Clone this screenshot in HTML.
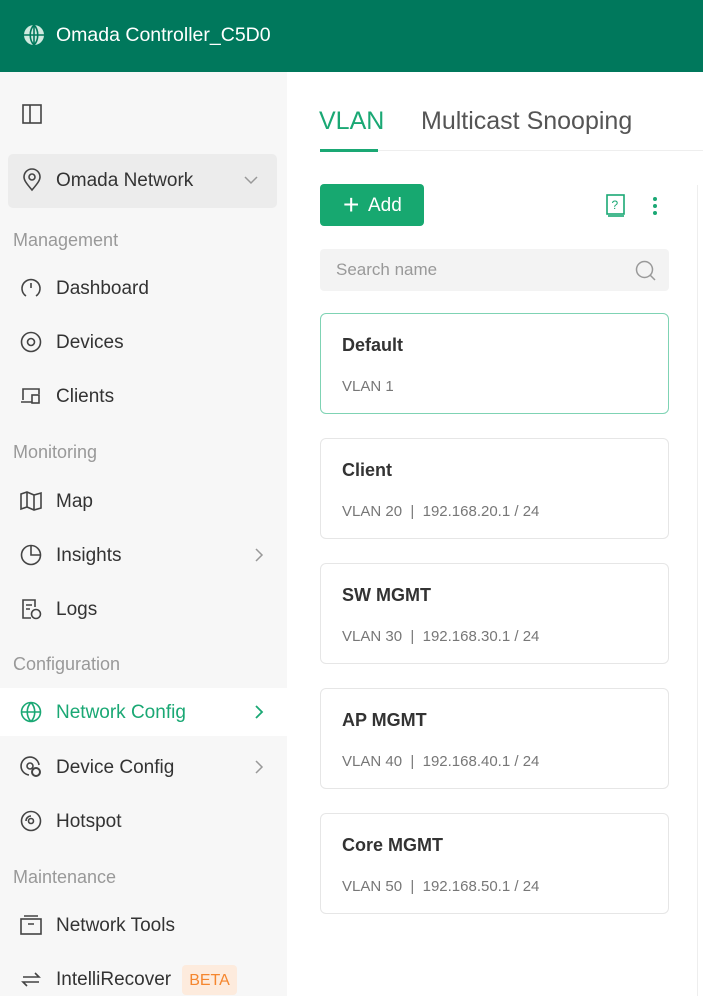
<!DOCTYPE html>
<html><head><meta charset="utf-8"><style>
*{margin:0;padding:0;box-sizing:border-box}
body{width:703px;height:996px;overflow:hidden;background:#fff;font-family:"Liberation Sans",sans-serif;position:relative;color:#333}
.hdr{position:absolute;left:0;top:0;width:703px;height:72px;background:#00785c;color:#fff;font-size:19.5px}
.hdr span{position:absolute;left:56px;top:24px}
.side{position:absolute;left:0;top:72px;width:287px;height:924px;background:#f7f7f7}
.a{position:absolute}
.sec{position:absolute;left:13px;font-size:18px;color:#999}
.it{position:absolute;left:0;width:287px;height:48px;font-size:19px;color:#333}
.it span{position:absolute;left:56px;top:14px}
.it svg{position:absolute;left:20px;top:13px}
.it .chev{left:255px;top:17px}
.card{position:absolute;left:320px;width:349px;height:101px;border:1px solid #e6e6e6;border-radius:6px;background:#fff}
.card b{position:absolute;left:21px;top:21px;font-size:18px;font-weight:bold;color:#333}
.card i{position:absolute;left:21px;top:64px;font-size:15px;font-style:normal;color:#777}
</style></head><body>
<div class="hdr"><svg class="a" style="left:23px;top:24px" width="22" height="22" viewBox="0 0 22 22"><circle cx="11" cy="11" r="10" fill="#cfe9df"/><path d="M11 1v20M1 11h20M11 1c-5 5-5 15 0 20M11 1c5 5 5 15 0 20" stroke="#00785c" stroke-width="1.6" fill="none"/></svg><span>Omada Controller_C5D0</span></div>
<div class="side">
<svg class="a" style="left:22px;top:32px" width="20" height="20"><rect x="1" y="1" width="18" height="18" fill="none" stroke="#444" stroke-width="1.6"/><line x1="8" y1="1" x2="8" y2="19" stroke="#444" stroke-width="1.6"/></svg>
<div class="a" style="left:8px;top:82px;width:269px;height:54px;background:#ececec;border-radius:5px"></div>
<svg class="a" style="left:22px;top:96px" width="20" height="24"><path d="M10 22C4 15 2 12 2 9a8 8 0 0116 0c0 3-2 6-8 13z" fill="none" stroke="#444" stroke-width="1.6"/><circle cx="10" cy="9" r="3" fill="none" stroke="#444" stroke-width="1.6"/></svg>
<div class="a" style="left:56px;top:98px;font-size:19px">Omada Network</div>
<svg class="a" style="left:244px;top:104px" width="14" height="9"><path d="M1 1l6 6 6-6" fill="none" stroke="#999" stroke-width="1.5"/></svg>
<div class="sec" style="top:158px">Management</div>
<div class="it" style="top:192px"><svg width="22" height="22"><path d="M6 19A9 9 0 1116 19" fill="none" stroke="#444" stroke-width="1.6"/><path d="M11 6v5" stroke="#444" stroke-width="1.6"/></svg><span>Dashboard</span></div>
<div class="it" style="top:246px"><svg width="22" height="22"><circle cx="11" cy="11" r="9.5" fill="none" stroke="#444" stroke-width="1.6"/><circle cx="11" cy="11" r="3.5" fill="none" stroke="#444" stroke-width="1.6"/></svg><span>Devices</span></div>
<div class="it" style="top:300px"><svg width="22" height="22"><path d="M3 15V4h16v5M1 17h11" fill="none" stroke="#444" stroke-width="1.6"/><rect x="12" y="10" width="7" height="8" fill="none" stroke="#444" stroke-width="1.6"/></svg><span>Clients</span></div>
<div class="sec" style="top:370px">Monitoring</div>
<div class="it" style="top:405px"><svg width="22" height="22"><path d="M1 4l6-2 7 3 7-2v15l-7 2-7-3-6 2z M7 2v15 M14 5v15" fill="none" stroke="#444" stroke-width="1.6"/></svg><span>Map</span></div>
<div class="it" style="top:459px"><svg width="22" height="22"><circle cx="11" cy="11" r="9.5" fill="none" stroke="#444" stroke-width="1.6"/><path d="M11 2v9h9" fill="none" stroke="#444" stroke-width="1.6"/></svg><span>Insights</span><svg class="chev" width="9" height="14"><path d="M1 1l6 6-6 6" fill="none" stroke="#999" stroke-width="1.5"/></svg></div>
<div class="it" style="top:513px"><svg width="22" height="22"><path d="M11 20H3V2h12v7M6 7h6M6 11h4" fill="none" stroke="#444" stroke-width="1.6"/><circle cx="16" cy="16" r="4.5" fill="none" stroke="#444" stroke-width="1.6"/></svg><span>Logs</span></div>
<div class="sec" style="top:582px">Configuration</div>
<div class="it" style="top:616px;background:#fff;color:#1aa874"><svg width="22" height="22"><circle cx="11" cy="11" r="9.5" fill="none" stroke="#1aa874" stroke-width="1.6"/><path d="M1.5 11h19M11 1.5c-5 5-5 14 0 19M11 1.5c5 5 5 14 0 19" fill="none" stroke="#1aa874" stroke-width="1.6"/></svg><span>Network Config</span><svg class="chev" width="9" height="14"><path d="M1 1l6 6-6 6" fill="none" stroke="#1aa874" stroke-width="1.8"/></svg></div>
<div class="it" style="top:671px"><svg width="22" height="22"><path d="M19 9A9 9 0 109 19" fill="none" stroke="#444" stroke-width="1.6"/><circle cx="10" cy="10" r="3" fill="none" stroke="#444" stroke-width="1.6"/><circle cx="16" cy="16" r="4" fill="none" stroke="#444" stroke-width="2"/></svg><span>Device Config</span><svg class="chev" width="9" height="14"><path d="M1 1l6 6-6 6" fill="none" stroke="#999" stroke-width="1.5"/></svg></div>
<div class="it" style="top:725px"><svg width="22" height="22"><circle cx="11" cy="11" r="9.5" fill="none" stroke="#444" stroke-width="1.6"/><circle cx="11" cy="11" r="2.5" fill="none" stroke="#444" stroke-width="1.6"/><path d="M6 11a5 5 0 015-5" fill="none" stroke="#444" stroke-width="1.6"/></svg><span>Hotspot</span></div>
<div class="sec" style="top:795px">Maintenance</div>
<div class="it" style="top:829px"><svg width="22" height="22"><rect x="1" y="5" width="20" height="15" fill="none" stroke="#444" stroke-width="1.6"/><path d="M4 2h14M8 10h6" stroke="#444" stroke-width="1.6"/></svg><span>Network Tools</span></div>
<div class="it" style="top:883px"><svg width="22" height="22"><path d="M3 9h16l-4-4M19 14H3l4 4" fill="none" stroke="#444" stroke-width="1.6"/></svg><span>IntelliRecover</span></div>
<div class="a" style="left:182px;top:893px;width:55px;height:30px;background:#fdebdd;border-radius:4px;color:#f5862e;font-size:16px;text-align:center;line-height:31px">BETA</div>
</div>
<div class="a" style="left:319px;top:107px;font-size:25px;color:#1aa874">VLAN</div>
<div class="a" style="left:421px;top:107px;font-size:25px;color:#555">Multicast Snooping</div>
<div class="a" style="left:320px;top:150px;width:383px;height:1px;background:#eee"></div>
<div class="a" style="left:320px;top:149px;width:58px;height:3px;background:#1aa874"></div>
<div class="a" style="left:697px;top:185px;width:1px;height:811px;background:#eee"></div>
<div class="a" style="left:320px;top:184px;width:104px;height:42px;background:#17a870;border-radius:4px;color:#fff;font-size:19px;line-height:43px"><span style="position:absolute;left:23px;top:-1px;font-size:28px;font-weight:300">+</span><span style="position:absolute;left:48px">Add</span></div>
<svg class="a" style="left:606px;top:194px" width="20" height="24"><rect x="1" y="1" width="17" height="19" fill="none" stroke="#1aa874" stroke-width="1.6"/><path d="M2 22h16" stroke="#1aa874" stroke-width="1.6"/><text x="5.5" y="15" font-size="12" fill="#1aa874" font-family="Liberation Sans">?</text></svg>
<svg class="a" style="left:652px;top:196px" width="6" height="20"><circle cx="3" cy="3" r="2" fill="#1aa874"/><circle cx="3" cy="10" r="2" fill="#1aa874"/><circle cx="3" cy="17" r="2" fill="#1aa874"/></svg>
<div class="a" style="left:320px;top:249px;width:349px;height:42px;background:#f3f3f3;border-radius:4px"><span style="position:absolute;left:16px;top:11px;font-size:17px;color:#999">Search name</span><svg class="a" style="left:315px;top:11px" width="22" height="22"><circle cx="9.5" cy="9.5" r="8" fill="none" stroke="#999" stroke-width="1.5"/><path d="M15 15l5 5" stroke="#999" stroke-width="1.5"/></svg></div>
<div class="card" style="top:313px;border:1.5px solid #7fd3b4"><b>Default</b><i>VLAN 1</i></div>
<div class="card" style="top:438px"><b>Client</b><i>VLAN 20 &nbsp;| &nbsp;192.168.20.1 / 24</i></div>
<div class="card" style="top:563px"><b>SW MGMT</b><i>VLAN 30 &nbsp;| &nbsp;192.168.30.1 / 24</i></div>
<div class="card" style="top:688px"><b>AP MGMT</b><i>VLAN 40 &nbsp;| &nbsp;192.168.40.1 / 24</i></div>
<div class="card" style="top:813px"><b>Core MGMT</b><i>VLAN 50 &nbsp;| &nbsp;192.168.50.1 / 24</i></div>
</body></html>
